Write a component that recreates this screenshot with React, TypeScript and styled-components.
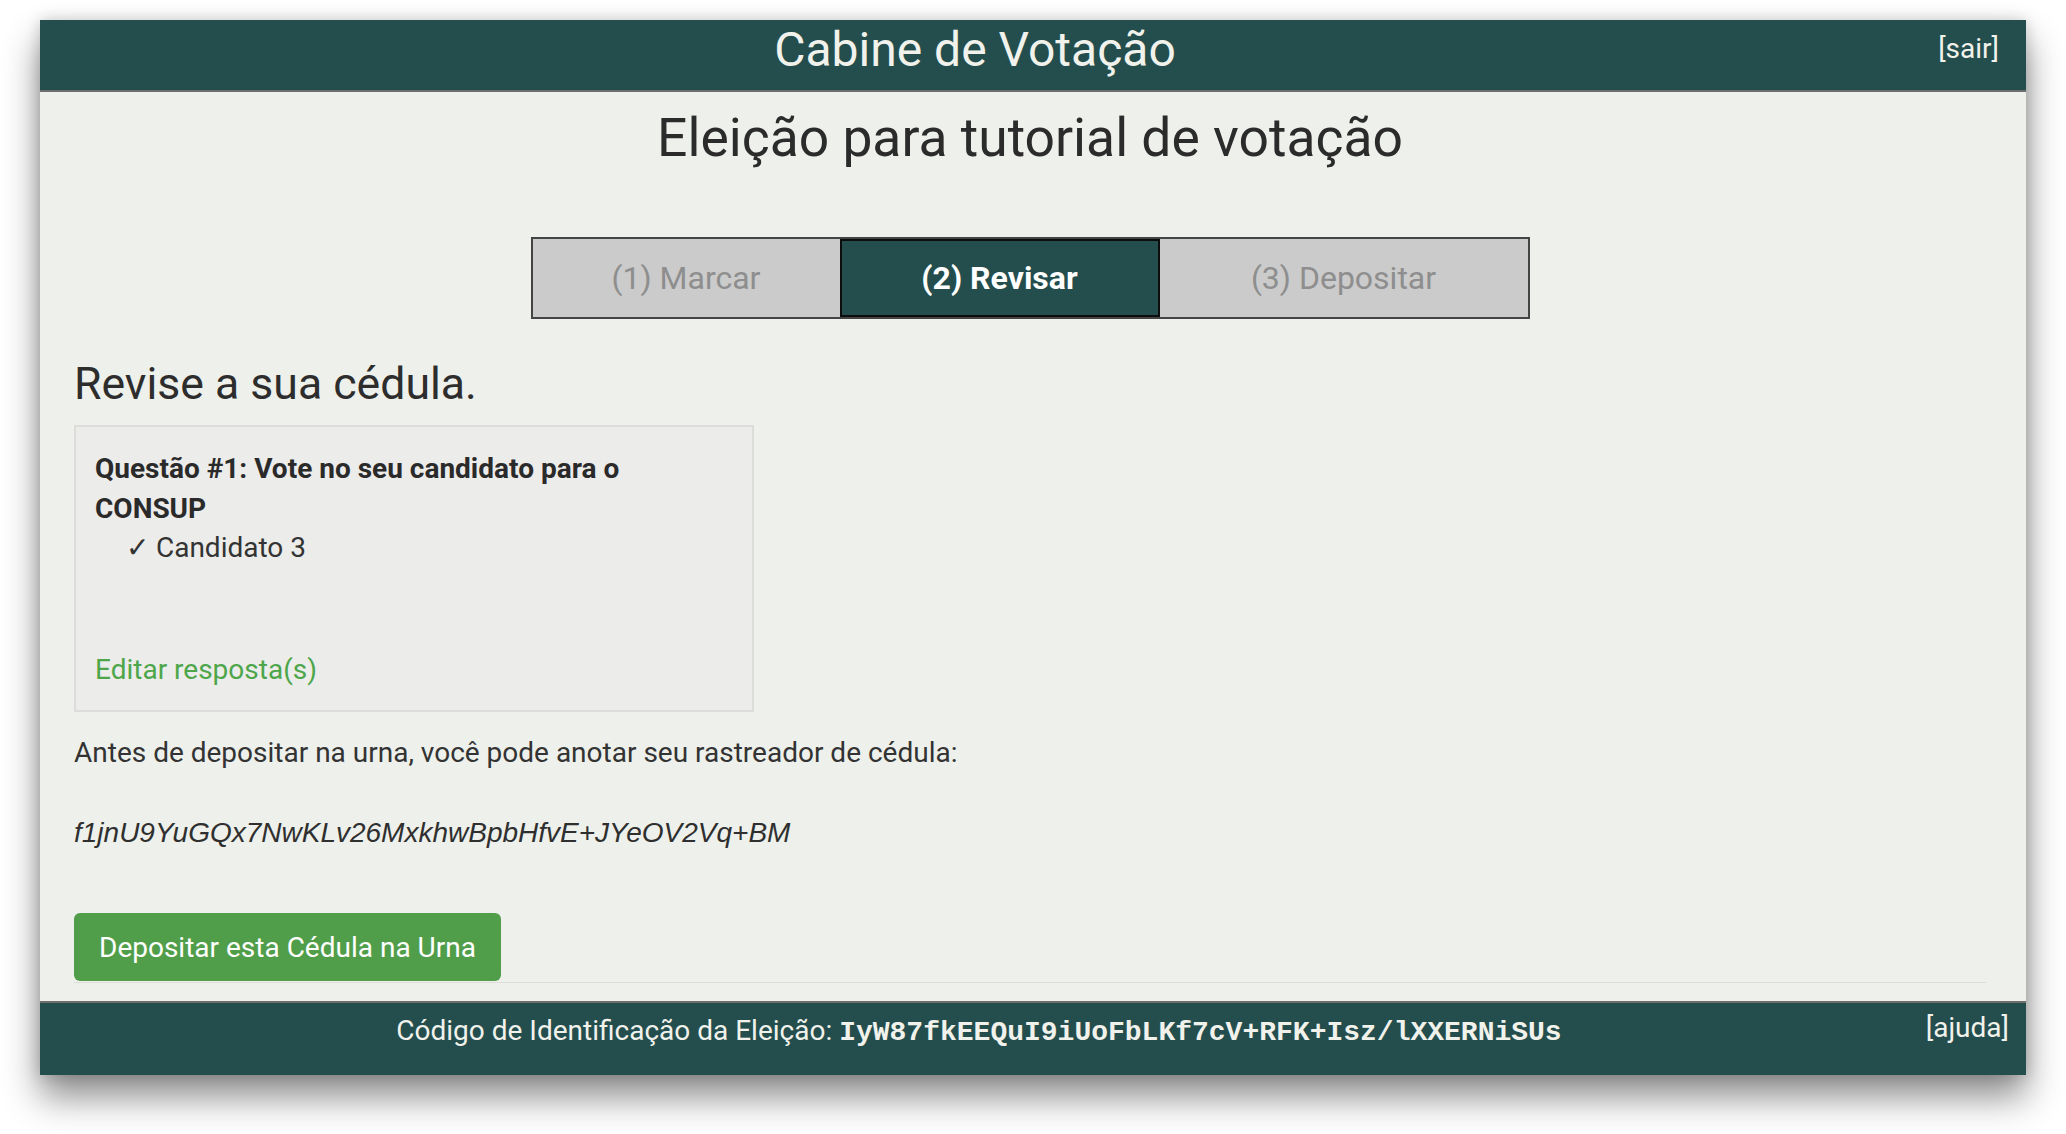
import { FC } from 'react';
import styled, { createGlobalStyle } from 'styled-components';

const Global = createGlobalStyle`
html, body{
  margin: 0;
  padding: 0;
  background: #ffffff;
}
body{
  font-family: Roboto, "Liberation Sans", sans-serif;
  color: #333;
}
`

const Page = styled.div`
padding: 20px 40px 60px;
`

const Booth = styled.div`
width: 1986px;
background: #eef0eb;
box-shadow: 0 22px 34px rgba(0, 0, 0, 0.45), 0 0 14px rgba(0, 0, 0, 0.18);
display: flex;
flex-direction: column;
`

const Header = styled.header`
position: relative;
height: 72px;
box-sizing: border-box;
padding-right: 116px;
background: #244e4d;
border-bottom: 2px solid #6d6f6d;
display: flex;
justify-content: center;
align-items: center;
color: #f1f2ec;
.title{
  font: 400 48px Roboto, sans-serif;
  line-height: 1;
  padding-bottom: 10px;
}
`

const CornerLink = styled.a<{ $right: number; $top: number }>`
position: absolute;
right: ${p => p.$right}px;
top: ${p => p.$top}px;
font: 400 28px Roboto, sans-serif;
color: #f1f2ec;
text-decoration: none;
cursor: pointer;
`

const Main = styled.main`
padding: 0 40px 0 34px;
display: flex;
flex-direction: column;
`

const ElectionName = styled.h1`
margin: 13px 0 0;
text-align: center;
font: 400 53.4px Roboto, sans-serif;
line-height: 65px;
color: #2b2b2b;
`

const Steps = styled.div`
align-self: center;
margin-top: 67px;
display: flex;
border: 2px solid #444;
`

const Step = styled.div<{ $width: number; $active?: boolean }>`
width: ${p => p.$width}px;
height: 78px;
display: flex;
align-items: center;
justify-content: center;
font: ${p => (p.$active ? 700 : 400)} 32px Roboto, sans-serif;
background: ${p => (p.$active ? '#244e4d' : '#cbcbcb')};
color: ${p => (p.$active ? '#ffffff' : '#8e8e8e')};
box-shadow: ${p => (p.$active ? 'inset 0 0 0 2px #0d0d0d' : 'none')};
`

const Heading = styled.h2`
margin: 39px 0 0;
font: 400 44.6px Roboto, sans-serif;
line-height: 53px;
color: #2d2d2d;
`

const Ballot = styled.div`
margin-top: 14px;
width: 680px;
box-sizing: border-box;
padding: 22px 19px 21px;
background: #ececea;
border: 2px solid #dcdcda;
font: 400 28px Roboto, sans-serif;
line-height: 39.6px;
.question{
  font-weight: 700;
  color: #2a2a2a;
  padding-right: 60px;
}
.answer{
  padding-left: 31px;
  color: #333;
}
.edit{
  display: inline-block;
  margin-top: 82px;
  color: #4ea64a;
  text-decoration: none;
}
`

const Text = styled.p<{ $top: number }>`
margin: ${p => p.$top}px 0 0;
font: 400 28px Roboto, sans-serif;
line-height: 39.4px;
color: #333;
`

const Tracker = styled(Text)`
font: italic 400 28px "Liberation Sans", Arial, sans-serif;
line-height: 39.4px;
color: #2f2f2f;
`

const CastButton = styled.button`
align-self: flex-start;
margin-top: 61px;
height: 68px;
padding: 0 25px;
border: none;
border-radius: 6px;
background: #519e4a;
color: #ffffff;
font: 400 28px Roboto, sans-serif;
cursor: pointer;
`

const Rule = styled.div`
height: 1px;
background: #dcdcd8;
margin: 1px 0 18px;
`

const Footer = styled.footer`
position: relative;
height: 74px;
box-sizing: border-box;
padding: 8px 108px 0 0;
background: #244e4d;
border-top: 2px solid #6d6f6d;
text-align: center;
color: #f1f2ec;
font: 400 28px Roboto, sans-serif;
line-height: 39px;
.hash{
  font: 700 28px "Liberation Mono", "Courier New", monospace;
}
`

export const App: FC = () => {
  return (
    <Page>
      <Global />
      <Booth>
        <Header>
          <div className="title">Cabine de Votação</div>
          <CornerLink $right={27} $top={12}>[sair]</CornerLink>
        </Header>
        <Main>
          <ElectionName>Eleição para tutorial de votação</ElectionName>
          <Steps>
            <Step $width={307}>(1) Marcar</Step>
            <Step $width={320} $active>(2) Revisar</Step>
            <Step $width={368}>(3) Depositar</Step>
          </Steps>
          <Heading>Revise a sua cédula.</Heading>
          <Ballot>
            <div className="question">Questão #1: Vote no seu candidato para o CONSUP</div>
            <div className="answer">✓ Candidato 3</div>
            <a className="edit">Editar resposta(s)</a>
          </Ballot>
          <Text $top={21}>Antes de depositar na urna, você pode anotar seu rastreador de cédula:</Text>
          <Tracker $top={40}>f1jnU9YuGQx7NwKLv26MxkhwBpbHfvE+JYeOV2Vq+BM</Tracker>
          <CastButton>Depositar esta Cédula na Urna</CastButton>
          <Rule />
        </Main>
        <Footer>
          Código de Identificação da Eleição: <span className="hash">IyW87fkEEQuI9iUoFbLKf7cV+RFK+Isz/lXXERNiSUs</span>
          <CornerLink $right={17} $top={8}>[ajuda]</CornerLink>
        </Footer>
      </Booth>
    </Page>
  )
}

export default App;
